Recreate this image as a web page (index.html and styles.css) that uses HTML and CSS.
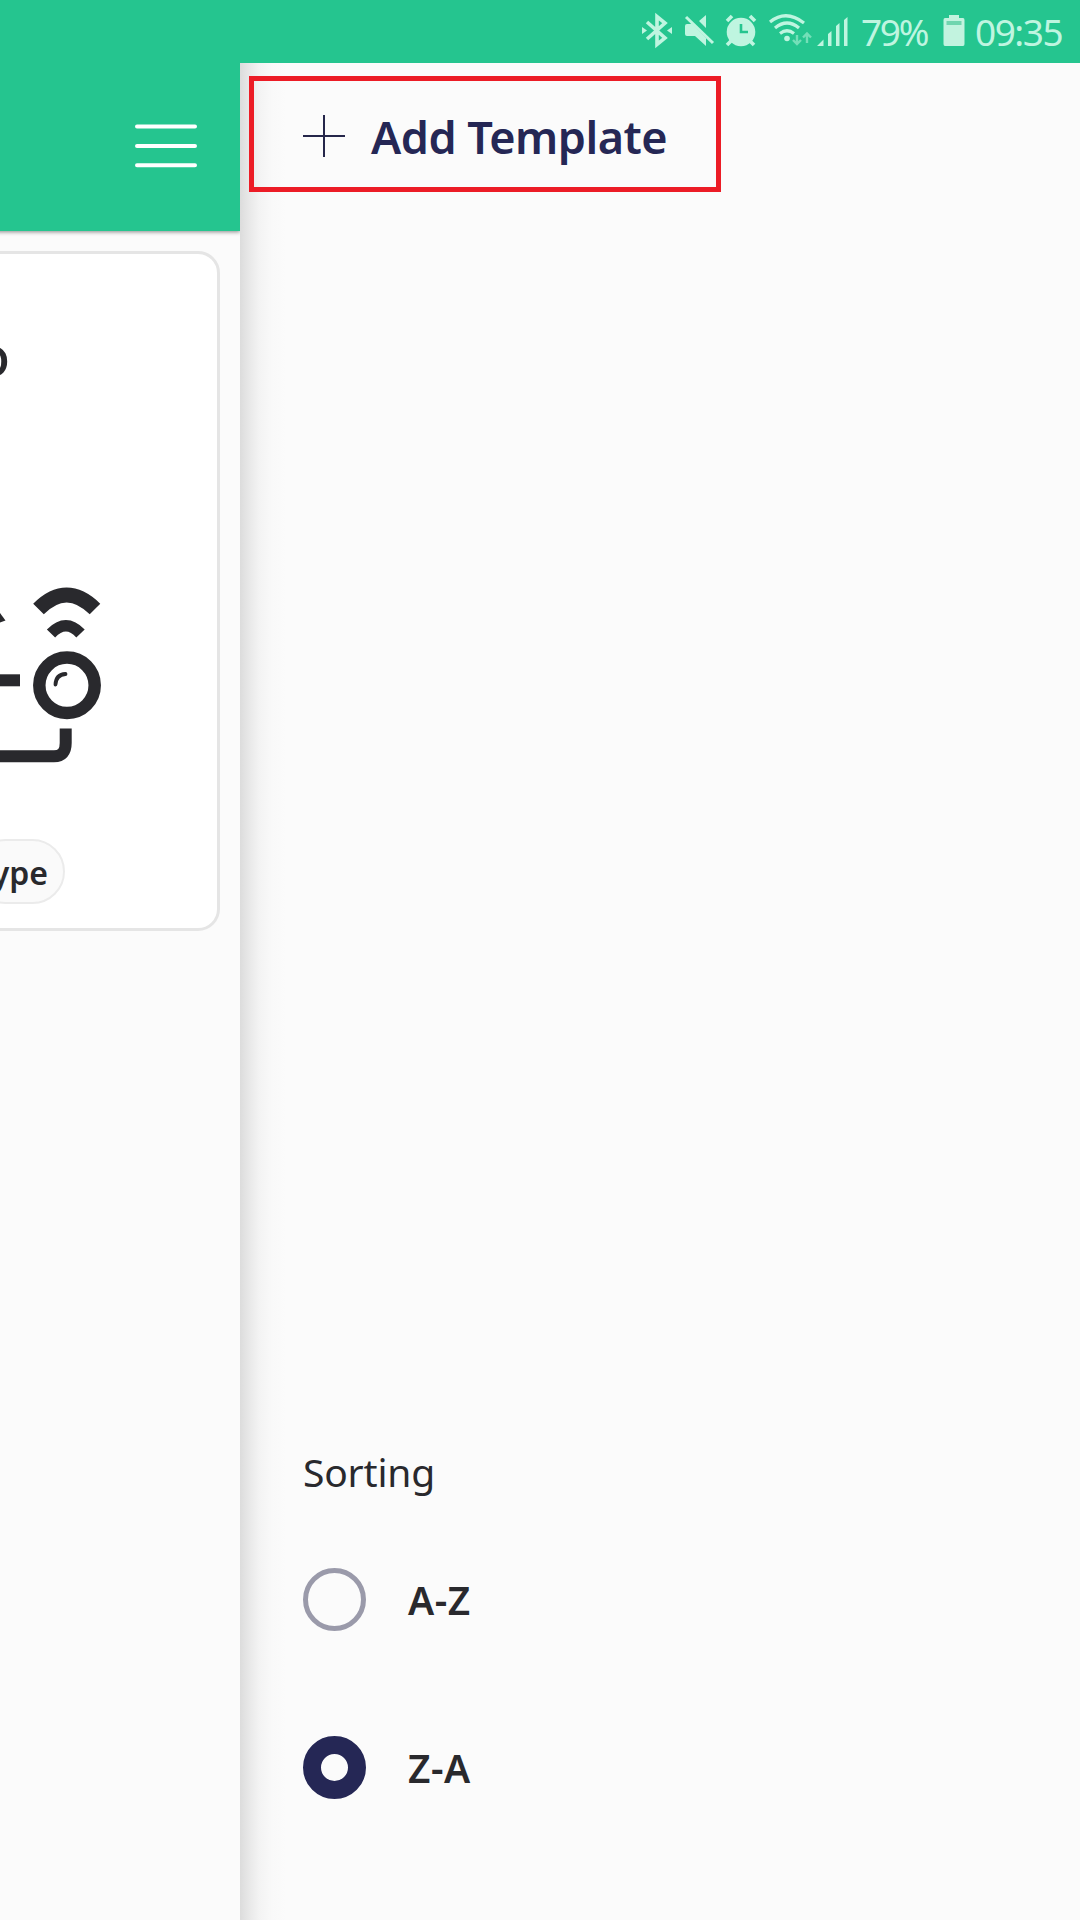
FILE: index.html
```html
<!DOCTYPE html>
<html lang="en">
<head>
<meta charset="utf-8">
<title>Templates</title>
<link rel="stylesheet" href="styles.css">
</head>
<body>
<div class="screen">
  <header class="status">
    <svg class="status-icons" width="220" height="63" viewBox="630 0 220 63" fill="#bff5e0" stroke="none">
      <path d="M647 22L665 38L657 44.500V16.500L665 23L647 39" fill="none" stroke="#bff5e0" stroke-width="3.600"/>
      <path d="M642 27l5 3.500-5 3.500zM672 27l-5 3.500 5 3.500z"/>
      <path d="M687 24H692L706 38V46L695 36H687Q685 36 685 34V26Q685 24 687 24ZM706 15V28L699 21Z"/>
      <path d="M686 17L713 43" fill="none" stroke="#bff5e0" stroke-width="3"/>
      <circle cx="741" cy="32" r="14.300"/>
      <path d="M727 21l5-5M755 21l-5-5M731 41l-4 4M750 41l4 4" fill="none" stroke="#bff5e0" stroke-width="3.600"/>
      <path d="M741 24V32H748" fill="none" stroke="#25c58f" stroke-width="2.600"/>
      <g fill="none" stroke="#bff5e0" stroke-width="3.200"><path d="M770 22Q786 9 804 23M775 28Q787 18 799 28M780 33.500Q787 28 794 33.500"/></g>
      <circle cx="787" cy="38.500" r="2.800"/>
      <path d="M797 35V44M793 40L797 44L801 40M807 43V33.500M803 37.500L807 33.500L811 37.500" fill="none" stroke="#74dfb8" stroke-width="2.400"/>
      <path d="M817 46L823.500 39.500V46ZM828 46V34L831.500 31V46ZM836 46V26L839.500 23V46ZM844 46V20L847.500 17V46Z"/>
    </svg>
    <span class="battery-level">79%</span>
    <svg class="battery" width="22" height="63" viewBox="0 0 22 63">
      <path d="M2 18H6V15H16V18H20Q21.500 18 21.500 20V44Q21.500 46 20 46H2Q.5 46 .5 44V20Q.5 18 2 18Z" fill="#c2f3df"/>
      <path d="M3.500 21H18.500V25H3.500Z" fill="#70d5af"/>
    </svg>
    <span class="clock">09:35</span>
  </header>
  <div class="body">
    <main class="page">
      <div class="appbar">
        <svg width="62" height="44" viewBox="0 0 62 44" stroke="#fff" stroke-width="4" stroke-linecap="round">
          <path d="M2 2.500H60M2 22H60M2 41.300H60"/>
        </svg>
      </div>
      <section class="card">
        <div class="card-title">o</div>
        <svg class="device" width="120" height="210" viewBox="0 570 120 210" fill="none" stroke="#29292d">
          <path d="M38.500 609Q66.500 581 95 609" stroke-width="15"/>
          <path d="M51 633.500Q66 618 80.500 633.500" stroke-width="11.500"/>
          <circle cx="67" cy="685.300" r="27.700" stroke-width="12.500"/>
          <path d="M55.500 684.500Q56 674.500 65.500 674" stroke-width="3.800" stroke-linecap="round"/>
          <path d="M0 680.300H20" stroke-width="12"/>
          <path d="M0 756.300H54Q65.700 756.300 65.700 743V728.500" stroke-width="12"/>
          <path d="M0 613L5.500 620.500L0 622.500Z" fill="#29292d" stroke="none"/>
        </svg>
        <div class="chip"><span>Type</span></div>
      </section>
    </main>
    <aside class="drawer">
      <button class="add">
        <svg width="42" height="42" viewBox="0 0 42 42" stroke="#25264a" stroke-width="2"><path d="M0 21H42M21 0V42"/></svg>
        <span>Add Template</span>
      </button>
      <div class="sorting">
        <h2>Sorting</h2>
        <div class="option"><i class="radio"></i><span>A-Z</span></div>
        <div class="option"><i class="radio on"></i><span>Z-A</span></div>
      </div>
    </aside>
  </div>
</div>
</body>
</html>
```
FILE: styles.css
```css
* { box-sizing: border-box; }
body { margin: 0; font-family: "Noto Sans", sans-serif; color: #29292d; }
.screen { width: 1080px; height: 1920px; display: flex; flex-direction: column; overflow: hidden; background: #fbfbfb; }
.status { height: 63px; flex: none; display: flex; justify-content: flex-end; background: #25c58f; color: #bff5e0; padding-right: 17px; font-size: 37px; line-height: 64px; white-space: nowrap; }
.status-icons { flex: none; }
.battery-level { width: 93px; padding-left: 11px; letter-spacing: -2.3px; }
.battery { flex: none; }
.clock { width: 88px; margin-left: 10px; letter-spacing: -1.5px; }
.body { flex: 1; min-height: 0; display: flex; }
.page { width: 240px; flex: none; overflow: hidden; }
.appbar { height: 168px; margin-left: -10px; padding: 61px 43px 0 0; display: flex; justify-content: flex-end; align-items: flex-start; background: #25c58f; box-shadow: 0 1px 4px rgba(0,0,0,.45); }
.card { width: 240px; height: 680px; margin: 20px 0 0 -20px; border: 3px solid #e5e5e5; border-radius: 22px; background: #fff; display: flex; flex-direction: column; align-items: flex-end; overflow: hidden; }
.card-title { height: 160px; padding: 71px 207px 0 0; font-size: 54px; font-weight: 500; line-height: 60px; }
.device { flex: none; margin: 156px 97px 0 0; }
.chip { width: 92px; height: 65px; margin: 59px 152px 0 0; border: 2px solid #ebebeb; border-radius: 33px; background: #fafafa; display: flex; justify-content: flex-end; padding-right: 15px; font-size: 32px; font-weight: 600; line-height: 64px; }
.drawer { flex: 1; display: flex; flex-direction: column; justify-content: space-between; align-items: flex-start; padding: 13px 0 69px 9px; background: linear-gradient(to right, #dcdcdc 0, #e8e8e8 9px, #f3f3f3 19px, #f9f9f9 32px, #fbfbfb 46px); }
.add { width: 472px; height: 116px; border: 5px solid #ec1c26; background: none; padding: 0 0 0 49px; display: flex; align-items: center; gap: 26px; font: 600 45px/60px "Noto Sans", sans-serif; letter-spacing: -.5px; color: #252755; white-space: nowrap; }
.add svg { margin-top: 4px; }
.add span { padding-top: 6px; }
.sorting { padding-left: 54px; }
.sorting h2 { margin: 0; height: 88px; font-size: 39px; line-height: 90px; font-weight: 400; letter-spacing: -.2px; }
.option { height: 168px; display: flex; align-items: center; gap: 42px; font-size: 39px; font-weight: 600; letter-spacing: .5px; }
.radio { width: 63px; height: 63px; border: 5px solid #9a9aaa; border-radius: 50%; }
.radio.on { border: 18px solid #252755; }
```
